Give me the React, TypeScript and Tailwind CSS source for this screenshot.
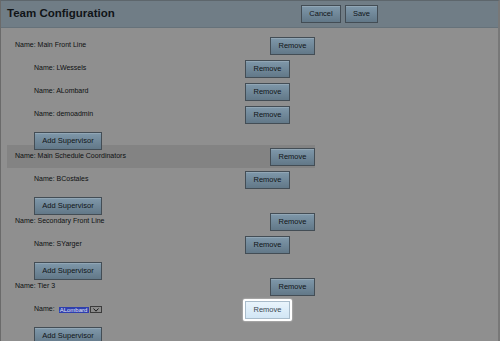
const FONT = { fontFamily: '"Liberation Sans", Arial, sans-serif' }

type Group = { name: string; supervisors: string[]; active?: boolean; editing?: boolean }

const GROUPS: Group[] = [
  { name: 'Main Front Line', supervisors: ['LWessels', 'ALombard', 'demoadmin'] },
  { name: 'Main Schedule Coordinators', supervisors: ['BCostales'], active: true },
  { name: 'Secondary Front Line', supervisors: ['SYarger'] },
  { name: 'Tier 3', supervisors: ['ALombard'], editing: true },
]

function DimButton({ label, className = '' }: { label: string; className?: string }) {
  return (
    <button
      type="button"
      className={`h-[18px] shrink-0 border border-[#434d55] bg-gradient-to-b from-[#7f98aa] to-[#627888] text-[7.5px] text-[#101417] leading-none shadow-[inset_0_1px_0_rgba(255,255,255,0.15)] ${className}`}
    >
      {label}
    </button>
  )
}

function FocusedRemove() {
  return (
    <div className="shrink-0 rounded-[2px] bg-white p-[2px] shadow-[0_0_2px_rgba(255,255,255,0.7)]">
      <button
        type="button"
        className="block h-[18px] w-[45px] border border-[#a9bccb] bg-gradient-to-b from-[#e9f4fc] to-[#d2e6f5] text-[7.5px] text-[#3a4650] leading-none"
      >
        Remove
      </button>
    </div>
  )
}

function SupervisorSelect({ value }: { value: string }) {
  return (
    <span className="ml-[4px] inline-flex items-center">
      <span className="flex h-[6px] w-[30px] items-center bg-[#2f3fae] px-[1px] text-[6px] text-[#e6e8f5] leading-none">
        {value}
      </span>
      <span className="ml-[1px] flex h-[7px] w-[12px] items-center justify-center border border-[#3b3b3b] bg-[#8c8c8c]">
        <svg width="6" height="4" viewBox="0 0 6 4">
          <path d="M0.5 0.5 L3 3.2 L5.5 0.5" fill="none" stroke="#1a1a1a" strokeWidth="1" />
        </svg>
      </span>
    </span>
  )
}

export default function App() {
  return (
    <div className="h-[341px] w-[500px] overflow-hidden bg-[#8f8f8f] text-[#0e1011]" style={FONT}>
      <div className="h-full border-l border-r-2 border-t border-l-[#6a6a6a] border-r-[#787878] border-t-[#5d666c]">
        <header className="flex h-[27px] items-center justify-between border-b border-[#66727a] bg-[#707d86] pl-[6px] pr-[120px]">
          <h1 className="text-[11.5px] font-bold text-[#111417]">Team Configuration</h1>
          <div className="flex gap-[4px]">
            <DimButton label="Cancel" className="w-[40px]" />
            <DimButton label="Save" className="w-[33px]" />
          </div>
        </header>

        <div className="pt-[6px]">
          {GROUPS.map((g) => (
            <div key={g.name}>
              <div
                className={`ml-[6px] flex h-[23px] w-[308px] items-center justify-between pl-[8px] ${
                  g.active ? 'bg-[#838383]' : ''
                }`}
              >
                <span className="text-[7px]">Name: {g.name}</span>
                <DimButton label="Remove" className="w-[45px]" />
              </div>

              {g.supervisors.map((s) => (
                <div key={s} className="ml-[33px] flex h-[23px] w-[256px] items-center justify-between">
                  {g.editing ? (
                    <>
                      <span className="flex items-center text-[7px]">
                        Name:
                        <SupervisorSelect value={s} />
                      </span>
                      <div className="-mr-[2px]">
                        <FocusedRemove />
                      </div>
                    </>
                  ) : (
                    <>
                      <span className="text-[7px]">Name: {s}</span>
                      <DimButton label="Remove" className="w-[45px]" />
                    </>
                  )}
                </div>
              ))}

              <div className="ml-[33px] h-[19px]">
                <DimButton label="Add Supervisor" className="w-[68px]" />
              </div>
            </div>
          ))}
        </div>
      </div>
    </div>
  )
}
